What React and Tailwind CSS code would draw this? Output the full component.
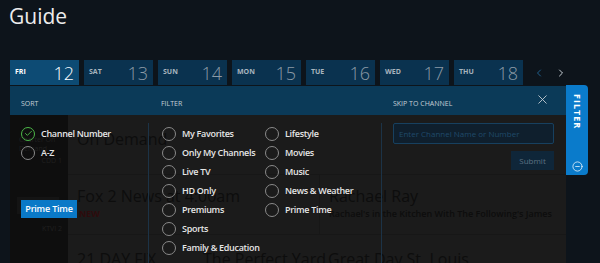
import { Check, ChevronLeft, ChevronRight, X, CircleMinus } from 'lucide-react';

const days = [
    { d: 'FRI', n: 12, active: true },
    { d: 'SAT', n: 13 },
    { d: 'SUN', n: 14 },
    { d: 'MON', n: 15 },
    { d: 'TUE', n: 16 },
    { d: 'WED', n: 17 },
    { d: 'THU', n: 18 },
];

const filtersA = ['My Favorites', 'Only My Channels', 'Live TV', 'HD Only', 'Premiums', 'Sports', 'Family & Education'];
const filtersB = ['Lifestyle', 'Movies', 'Music', 'News & Weather', 'Prime Time'];

function Radio({ label, checked }) {
    return (
        <div className="flex items-center h-[19px]">
            <span className={`shrink-0 w-[14px] h-[14px] rounded-full border-[1.5px] flex items-center justify-center ${checked ? 'border-[#4cb848]' : 'border-[#8a8a8a]'}`}>
                {checked && <Check size={9} strokeWidth={2.5} className="text-[#4cb848]" />}
            </span>
            <span className="ml-[6px] text-[9px] font-semibold tracking-[-0.3px] text-[#e6e6e6] whitespace-nowrap">{label}</span>
        </div>
    );
}

export default function App() {
    return (
        <div className="w-[600px] h-[263px] bg-[#0d141b] overflow-hidden relative" style={{ fontFamily: '"Open Sans", sans-serif' }}>
            <h1 className="absolute left-[9px] top-[1px] text-[21px] text-[#ececec] leading-[30px]">Guide</h1>

            <div className="absolute left-[10px] top-[60px] flex items-center">
                {days.map(day => (
                    <div key={day.d} className={`w-[69px] h-[25px] mr-[5px] flex items-center justify-between pl-[5px] pr-[5px] ${day.active ? 'bg-[#0d4b74]' : 'bg-[#0a324f]'}`}>
                        <span className={`text-[7px] font-bold ${day.active ? 'text-white' : 'text-[#a8b4be]'}`}>{day.d}</span>
                        <span className={`text-[18px] font-light leading-none ${day.active ? 'text-white' : 'text-[#8c9aa6]'}`}>{day.n}</span>
                    </div>
                ))}
                <ChevronLeft size={12} className="text-[#1f5f8c] ml-[5px]" />
                <ChevronRight size={12} className="text-[#c8d0d6] ml-[10px]" />
            </div>

            {/* filter tab */}
            <div className="absolute left-[566px] top-[85px] w-[22px] h-[90px] bg-[#0a7bcb] rounded-r-[4px] flex flex-col items-center justify-between pt-[9px] pb-[3px]">
                <span className="text-[9px] font-bold text-white tracking-[1px] [writing-mode:vertical-rl]">FILTER</span>
                <CircleMinus size={11} strokeWidth={1.6} className="text-white" />
            </div>

            <div className="absolute left-[10px] top-[86px] w-[556px] h-[177px] flex flex-col">
                <div className="shrink-0 h-[29px] bg-[#0b3a58] flex items-end pb-[6px] text-[7px] text-[#c5ced6] relative">
                    <span className="ml-[11px] w-[140px]">SORT</span>
                    <span className="w-[232px]">FILTER</span>
                    <span>SKIP TO CHANNEL</span>
                    <X size={15} strokeWidth={1.4} className="absolute right-[16px] top-[6px] text-[#c8d0d6]" />
                </div>

                <div className="flex-1 relative bg-[#1b1b1b] overflow-hidden">
                    {/* guide behind the overlay */}
                    <div className="absolute inset-0 flex text-[#0d0d0d]">
                        <div className="shrink-0 w-[58px] bg-[#0e0e0e] flex flex-col text-[7px] text-[#202020]">
                            <div className="shrink-0 h-[60px] pt-[20px] pl-[9px] leading-[9px]">Charter On<br />Demand<div className="text-right pr-[6px] mt-[3px]">CDD 1</div></div>
                            <div className="shrink-0 h-[60px] pt-[22px] pl-[7px]">
                                <div className="w-[42px] h-[17px] bg-[#141414]" />
                                <div className="text-right pr-[6px] mt-[10px]">KTVI 2</div>
                            </div>
                        </div>
                        <div className="flex-1 flex flex-col whitespace-nowrap">
                            <div className="shrink-0 h-[60px] border-b border-[#171717] pl-[9px] pt-[12px] text-[16px]">On Demand</div>
                            <div className="shrink-0 h-[60px] border-b border-[#171717] flex">
                                <div className="shrink-0 w-[251px] pl-[9px] pt-[10px]">
                                    <div className="text-[16px] leading-[22px]">Fox 2 News at 4:00am</div>
                                    <div className="text-[9px] font-bold text-[#2e0b0d] ml-[2px]">NEW</div>
                                </div>
                                <div className="pl-[9px] pt-[10px] border-l border-[#171717]">
                                    <div className="text-[16px] leading-[22px]">Rachael Ray</div>
                                    <div className="text-[9px] font-semibold">Rachael's in the Kitchen With The Following's James</div>
                                </div>
                            </div>
                            <div className="shrink-0 flex text-[16px] pt-[12px]">
                                <div className="w-[126px] pl-[9px]">21 DAY FIX</div>
                                <div className="w-[125px] pl-[9px]">The Perfect Yard</div>
                                <div className="pl-[9px]">Great Day St. Louis</div>
                            </div>
                        </div>
                    </div>

                    {/* filter overlay */}
                    <div className="absolute inset-0 flex pt-[8px]">
                        <div className="shrink-0 w-[138px] pl-[11px] pt-[1px]">
                            <Radio label="Channel Number" checked />
                            <Radio label="A-Z" />
                            <div className="mt-[38px] w-[56px] h-[18px] bg-[#0a79c7] flex items-center justify-center text-[9px] font-semibold tracking-[-0.2px] text-white">Prime Time</div>
                        </div>
                        <div className="shrink-0 w-[233px] border-l border-[#1c3347] pl-[13px] pt-[1px] flex">
                            <div className="w-[103px]">
                                {filtersA.map(f => <Radio key={f} label={f} />)}
                            </div>
                            <div>
                                {filtersB.map(f => <Radio key={f} label={f} />)}
                            </div>
                        </div>
                        <div className="flex-1 border-l border-[#1c3347] pl-[11px] pr-[12px] flex flex-col items-end">
                            <input
                                className="w-full h-[21px] bg-[#0f1f2d] border border-[#17405f] rounded-[2px] px-[5px] text-[8px] text-[#9fb2c2] placeholder-[#1f4a6a] outline-none"
                                placeholder="Enter Channel Name or Number"
                            />
                            <button className="mt-[7px] w-[43px] h-[19px] bg-[#0f2639] text-[8px] text-[#5d7283]">Submit</button>
                        </div>
                    </div>
                </div>
            </div>
        </div>
    );
}
